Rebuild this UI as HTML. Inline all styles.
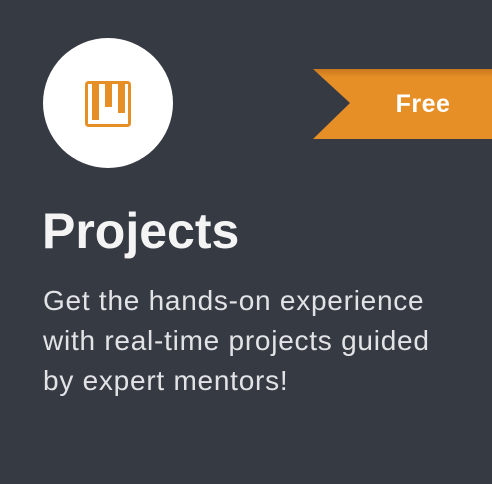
<!DOCTYPE html>
<html><head><style>
html,body{margin:0;padding:0;}
body{width:492px;height:484px;background:#363a43;position:relative;overflow:hidden;font-family:"Liberation Sans",sans-serif;}
.circle{position:absolute;left:43px;top:38px;width:130px;height:130px;border-radius:50%;background:#fff;}
.ribbon{position:absolute;left:313px;top:69px;width:179px;height:70px;}
.free{position:absolute;left:350px;top:69px;width:146px;height:70px;line-height:70px;text-align:center;color:#fff;font-weight:bold;font-size:25px;letter-spacing:0.5px;}
h1{position:absolute;left:42px;top:199px;margin:0;color:#f4f4f4;font-size:50px;font-weight:bold;line-height:64px;}
p{position:absolute;left:43px;top:281px;margin:0;color:#e2e3e6;font-size:28px;line-height:40px;letter-spacing:0.75px;width:449px;white-space:nowrap;}
</style></head><body>
<div class="circle"></div>
<svg style="position:absolute;left:85px;top:81px" width="46" height="46" viewBox="0 0 46 46">
<rect x="1.5" y="1.5" width="43" height="43" rx="2" fill="none" stroke="#e68f26" stroke-width="3"/>
<rect x="7" y="3" width="7" height="36" fill="#e68f26"/>
<rect x="20" y="3" width="7" height="23" fill="#e68f26"/>
<rect x="33" y="3" width="7" height="29" fill="#e68f26"/>
</svg>
<svg class="ribbon" viewBox="0 0 179 70">
<defs><linearGradient id="g" x1="0" y1="0" x2="0" y2="1"><stop offset="0" stop-color="#c9781e"/><stop offset="0.12" stop-color="#e68f26"/><stop offset="1" stop-color="#e68f26"/></linearGradient></defs>
<polygon points="0,0 179,0 179,70 0,70 37,34" fill="url(#g)"/>
</svg>
<div class="free">Free</div>
<h1>Projects</h1>
<p>Get the hands-on experience<br>with real-time projects guided<br>by expert mentors!</p>
</body></html>
